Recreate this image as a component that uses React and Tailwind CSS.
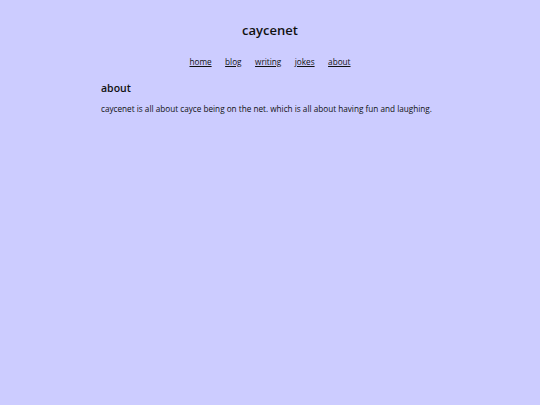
export default function App() {
  return (
    <div className="min-h-[405px] w-full bg-[#ccccff] text-[#111] font-['Open_Sans',sans-serif]">
      <header className="pt-[21px] flex flex-col items-center">
        <h1 className="text-[13px] leading-[18px] font-semibold">caycenet</h1>
        <nav className="mt-[16.5px] flex gap-[13.5px] text-[8.2px] leading-[11px]">
          <a className="underline" href="#">home</a>
          <a className="underline" href="#">blog</a>
          <a className="underline" href="#">writing</a>
          <a className="underline" href="#">jokes</a>
          <a className="underline" href="#">about</a>
        </nav>
      </header>
      <main className="mx-[101px] mt-[14.5px]">
        <h2 className="text-[10.5px] leading-[14px] font-semibold">about</h2>
        <p className="mt-[8px] text-[8.2px] leading-[11px]">
          caycenet is all about cayce being on the net. which is all about having fun and laughing.
        </p>
      </main>
    </div>
  );
}
